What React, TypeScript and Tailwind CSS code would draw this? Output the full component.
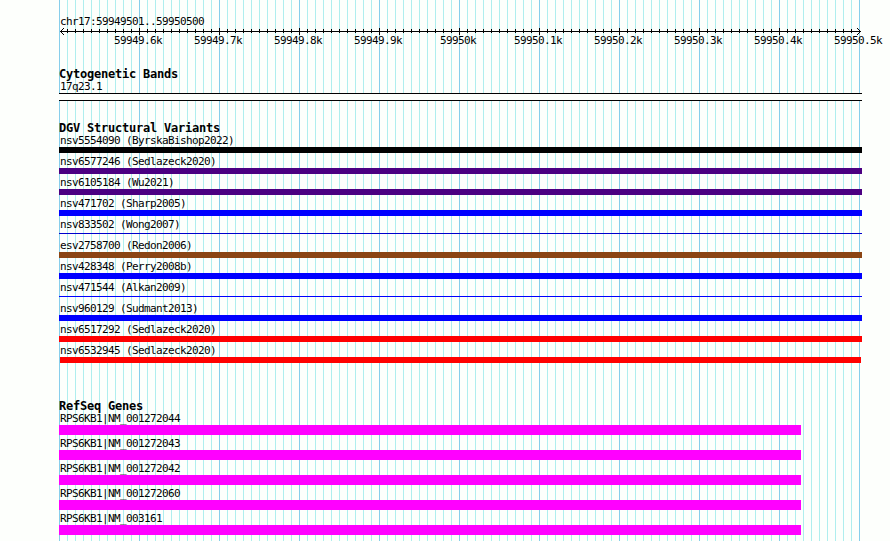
import React from 'react';

interface Variant {
  label: string;
  color: string;
  thin?: boolean;
  inset?: string;
}

const MINOR_STEP = 8;
const MINOR_COUNT = 101;

const axisLabels = [
  '59949.6k',
  '59949.7k',
  '59949.8k',
  '59949.9k',
  '59950k',
  '59950.1k',
  '59950.2k',
  '59950.3k',
  '59950.4k',
  '59950.5k',
];

const variants: Variant[] = [
  { label: 'nsv5554090 (ByrskaBishop2022)', color: 'bg-black' },
  { label: 'nsv6577246 (Sedlazeck2020)', color: 'bg-[#4b0082]' },
  { label: 'nsv6105184 (Wu2021)', color: 'bg-[#4b0082]' },
  { label: 'nsv471702 (Sharp2005)', color: 'bg-[#0000ff]' },
  { label: 'nsv833502 (Wong2007)', color: 'bg-[#0000cd]', thin: true },
  { label: 'esv2758700 (Redon2006)', color: 'bg-[#8b4513]' },
  { label: 'nsv428348 (Perry2008b)', color: 'bg-[#0000ff]' },
  { label: 'nsv471544 (Alkan2009)', color: 'bg-[#0000ff]', thin: true },
  { label: 'nsv960129 (Sudmant2013)', color: 'bg-[#0000ff]' },
  { label: 'nsv6517292 (Sedlazeck2020)', color: 'bg-[#ff0000]' },
  { label: 'nsv6532945 (Sedlazeck2020)', color: 'bg-[#ff0000]', inset: 'mx-px' },
];

const genes = [
  'RPS6KB1|NM_001272044',
  'RPS6KB1|NM_001272043',
  'RPS6KB1|NM_001272042',
  'RPS6KB1|NM_001272060',
  'RPS6KB1|NM_003161',
];

const ticks = Array.from({ length: MINOR_COUNT }, (_, i) => i);

function GridLines() {
  return (
    <svg className="absolute inset-0" width="803" height="541" shapeRendering="crispEdges">
      {ticks.map((i) => (
        <rect
          key={i}
          x={i * MINOR_STEP}
          y={0}
          width={1}
          height={541}
          fill={i % 10 === 0 ? '#87ceeb' : '#afeeee'}
        />
      ))}
    </svg>
  );
}

function Ruler() {
  return (
    <svg className="block" width="803" height="9" shapeRendering="crispEdges">
      <rect x={1} y={4} width={801} height={1} />
      {ticks.slice(1, -1).map((i) =>
        i % 10 === 0 ? (
          <rect key={i} x={i * MINOR_STEP} y={1} width={1} height={7} />
        ) : (
          <rect key={i} x={i * MINOR_STEP} y={2} width={1} height={4} />
        )
      )}
      {/* Arrow heads */}
      {[1, 2, 3].map((d) => (
        <g key={d}>
          <rect x={1 + d} y={4 - d} width={1} height={1} />
          <rect x={1 + d} y={4 + d} width={1} height={1} />
          <rect x={801 - d} y={4 - d} width={1} height={1} />
          <rect x={801 - d} y={4 + d} width={1} height={1} />
        </g>
      ))}
    </svg>
  );
}

function TrackTitle({ children }: { children: React.ReactNode }) {
  return <h2 className="h-[13px] text-[12px] leading-[13px] font-bold tracking-[-0.22px]">{children}</h2>;
}

function FeatureLabel({ children }: { children: React.ReactNode }) {
  return <div className="h-[13px] pl-px">{children}</div>;
}

export default function App() {
  return (
    <div className="h-[541px] w-[890px] overflow-hidden bg-[#fdfffc] pl-[59px] font-['DejaVu_Sans_Mono',monospace] text-[11px] leading-[13px] tracking-[-0.62px] whitespace-pre text-black">
      <div className="relative h-full w-[803px]">
        <GridLines />
        <div className="relative pt-[15px]">
          {/* Scale */}
          <div className="h-3 pl-px">chr17:59949501..59950500</div>
          <Ruler />
          <div className="-mt-0.5 -mr-10 ml-[39px] flex h-[13px]">
            {axisLabels.map((label) => (
              <span key={label} className="w-20 shrink-0 text-center">
                {label}
              </span>
            ))}
          </div>

          {/* Cytogenetic bands */}
          <section className="mt-[21px]">
            <TrackTitle>Cytogenetic Bands</TrackTitle>
            <div className="-mt-px">
              <FeatureLabel>17q23.1</FeatureLabel>
            </div>
            <div className="h-2 border-y border-black bg-[#fdfffc]"></div>
          </section>

          {/* Structural variants */}
          <section className="mt-[21px]">
            <TrackTitle>DGV Structural Variants</TrackTitle>
            <div className="-mt-px">
              {variants.map(({ label, color, thin, inset }) => (
                <div key={label} className="h-[21px]">
                  <FeatureLabel>{label}</FeatureLabel>
                  <div className={`${color} ${inset ?? ''} ${thin ? 'mt-0.5 h-px' : 'h-1.5'}`}></div>
                </div>
              ))}
            </div>
          </section>

          {/* Genes */}
          <section className="mt-[35px]">
            <TrackTitle>RefSeq Genes</TrackTitle>
            <div className="-mt-px">
              {genes.map((gene) => (
                <div key={gene} className="h-[25px]">
                  <FeatureLabel>{gene}</FeatureLabel>
                  <div className="h-2.5 w-[742px] bg-[#ff00ff]"></div>
                </div>
              ))}
            </div>
          </section>
        </div>
      </div>
    </div>
  );
}
